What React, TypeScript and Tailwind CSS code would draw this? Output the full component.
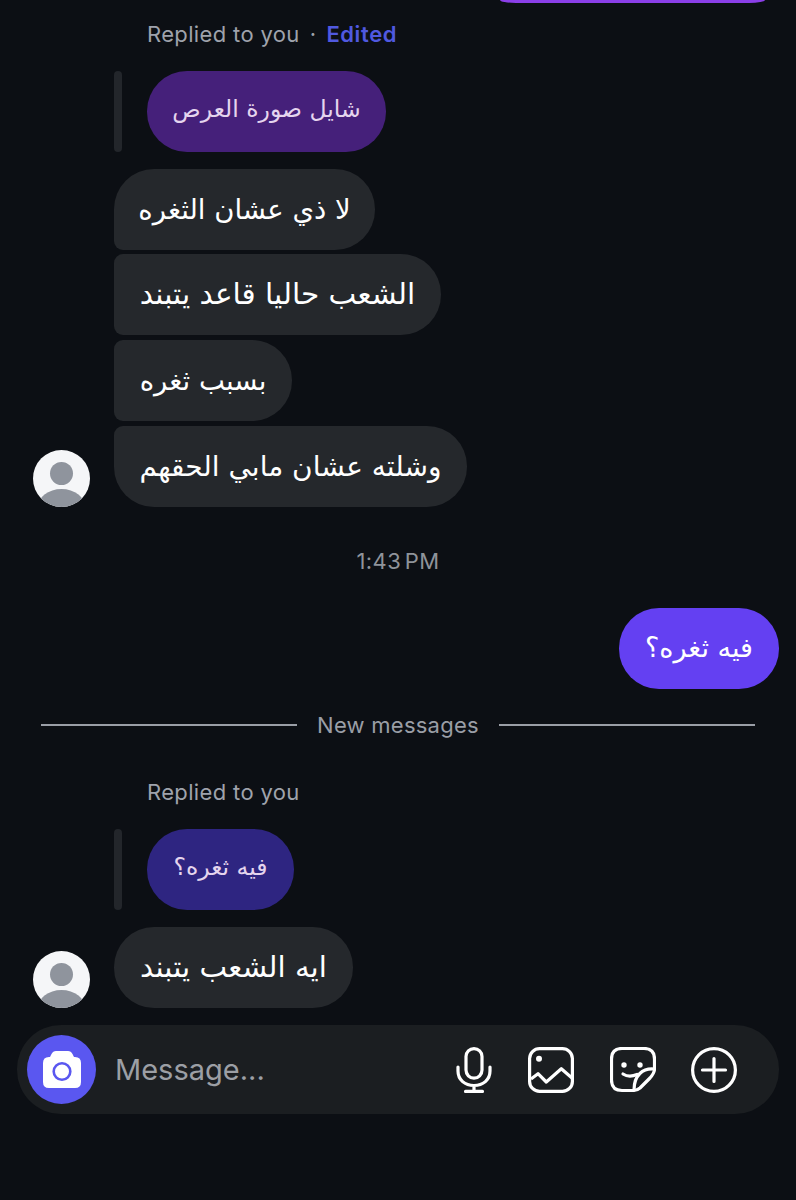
const arabic = { fontFamily: '"DejaVu Sans", sans-serif' };

function Avatar() {
    return (
        <svg viewBox="0 0 57 57" className="w-[57px] h-[57px] shrink-0">
            <defs>
                <clipPath id="circle"><circle cx="28.5" cy="28.5" r="28.5" /></clipPath>
            </defs>
            <g clipPath="url(#circle)">
                <rect width="57" height="57" fill="#f5f6f8" />
                <circle cx="28.5" cy="23.5" r="11.5" fill="#8f949d" />
                <ellipse cx="28.5" cy="58" rx="24" ry="19" fill="#8f949d" />
            </g>
        </svg>
    );
}

function Bubble({ text, width, className }: { text: string; width: string; className: string }) {
    return (
        <div dir="rtl" style={arabic} className={`h-[81px] flex items-center justify-center text-white whitespace-nowrap bg-[#25282c] ${width} ${className}`}>
            {text}
        </div>
    );
}

function Row({ avatar, mt, children }: { avatar?: boolean; mt: string; children: React.ReactNode }) {
    return (
        <div className={`flex items-end pl-[33px] ${mt}`}>
            <div className="w-[57px] mr-[24px] shrink-0">{avatar && <Avatar />}</div>
            {children}
        </div>
    );
}

function Reply({ text, width, bg, mt }: { text: string; width: string; bg: string; mt: string }) {
    return (
        <div className={`flex pl-[114px] ${mt}`}>
            <div className="w-[8px] h-[81px] rounded-full bg-[#23262b] mr-[25px]" />
            <div dir="rtl" style={arabic} className={`h-[81px] pb-[3px] rounded-[40px] flex items-center justify-center text-[#e5d5ee] text-[23.5px] whitespace-nowrap ${width} ${bg}`}>
                {text}
            </div>
        </div>
    );
}

function Label({ children, mt }: { children: React.ReactNode; mt: string }) {
    return <div className={`pl-[147px] h-[24px] leading-[24px] text-[22px] tracking-[0.35px] text-[#9fa3ac] whitespace-nowrap ${mt}`}>{children}</div>;
}

export default function App() {
    return (
        <div className="w-[796px] h-[1200px] overflow-hidden bg-[#0c0f14] flex flex-col" style={{ fontFamily: 'Inter, sans-serif' }}>
            <div className="h-[3px] ml-[500px] w-[265px] rounded-b-[16px_3px] bg-[#8b3fe8]" />
            <Label mt="mt-[19px]">
                Replied to you<span className="ml-[10px] mr-[10px]">·</span><span className="text-[#5059e0] font-semibold tracking-[0.6px]">Edited</span>
            </Label>
            <Reply text="شايل صورة العرص" width="w-[239px]" bg="bg-[#45207a]" mt="mt-[25px]" />
            <Row mt="mt-[17px]">
                <Bubble text="لا ذي عشان الثغره" width="w-[261px]" className="text-[27.5px] rounded-r-[40px] rounded-tl-[40px] rounded-bl-[9px]" />
            </Row>
            <Row mt="mt-[4px]">
                <Bubble text="الشعب حاليا قاعد يتبند" width="w-[327px]" className="text-[29.5px] rounded-r-[40px] rounded-l-[9px]" />
            </Row>
            <Row mt="mt-[5px]">
                <Bubble text="بسبب ثغره" width="w-[178px]" className="text-[27.5px] rounded-r-[40px] rounded-l-[9px]" />
            </Row>
            <Row avatar mt="mt-[5px]">
                <Bubble text="وشلته عشان مابي الحقهم" width="w-[353px]" className="text-[28px] rounded-r-[40px] rounded-tl-[9px] rounded-bl-[40px]" />
            </Row>
            <div className="mt-[42px] h-[24px] leading-[24px] text-center text-[22px] tracking-[0.4px] [word-spacing:-3px] text-[#8f939a]">1:43 PM</div>
            <div className="mt-[35px] flex justify-end pr-[17px]">
                <div dir="rtl" style={arabic} className="h-[81px] w-[160px] rounded-[40px] flex items-center justify-center bg-[#6440f2] text-white text-[27px] whitespace-nowrap">
                    فيه ثغره؟
                </div>
            </div>
            <div className="mt-[23px] h-[26px] flex items-center px-[41px]">
                <div className="flex-1 h-[2px] bg-[#9a9ea6]" />
                <div className="w-[202px] text-center text-[22px] tracking-[0.25px] text-[#9a9ea6]">New messages</div>
                <div className="flex-1 h-[2px] bg-[#9a9ea6]" />
            </div>
            <Label mt="mt-[42px]">Replied to you</Label>
            <Reply text="فيه ثغره؟" width="w-[147px]" bg="bg-[#2e2581]" mt="mt-[25px]" />
            <Row avatar mt="mt-[17px]">
                <Bubble text="ايه الشعب يتبند" width="w-[239px]" className="text-[29.3px] rounded-[40px]" />
            </Row>
            <div className="mt-[17px] mx-[17px] h-[89px] rounded-[44px] bg-[#1b1e21] flex items-center pl-[10px] pr-[42px]">
                <div className="w-[69px] h-[69px] rounded-full bg-[#5a57f0] flex items-center justify-center shrink-0">
                    <svg viewBox="0 0 38 37" className="w-[38px] h-[37px]">
                        <path fill="#fff" d="M13 0h12q3 0 4.5 3l1.5 3h1q6 0 6 6v19q0 6-6 6H6q-6 0-6-6V12q0-6 6-6h1l1.500-3q1.500-3 4.500-3Z" />
                        <circle cx="19" cy="20.500" r="8.300" fill="none" stroke="#5a57f0" strokeWidth="2.600" />
                    </svg>
                </div>
                <div className="ml-[19px] flex-1 text-[29px] text-[#9c9fa5]">Message...</div>
                <div className="flex items-center gap-[36px] text-white">
                    <svg viewBox="0 0 36 46" className="w-[36px] h-[46px]" fill="none" stroke="currentColor" strokeWidth="3.200" strokeLinecap="round">
                        <rect x="10" y="1.600" width="16" height="29.500" rx="8" />
                        <path d="M2 20v4c0 9 7 14.500 16 14.500s16-5.500 16-14.500v-4M18 38.500v5.500M9.500 44.400h17" />
                    </svg>
                    <svg viewBox="0 0 46 46" className="w-[46px] h-[46px]" fill="none" stroke="currentColor" strokeWidth="3.200" strokeLinejoin="round">
                        <rect x="1.600" y="1.600" width="42.800" height="42.800" rx="10" />
                        <circle cx="11" cy="11.700" r="3" fill="currentColor" stroke="none" />
                        <path d="M3 32l7-5.300L18.300 35l15-13.300L44 31" />
                    </svg>
                    <svg viewBox="0 0 46 46" className="w-[46px] h-[46px]" fill="none" stroke="currentColor" strokeWidth="3.200" strokeLinecap="round" strokeLinejoin="round">
                        <path d="M24 43.500H12Q1.500 43.500 1.500 33V12Q1.500 1.500 12 1.500h22Q44.500 1.500 44.500 12v10Q44.500 26 40 31L30 41Q27 43.500 24 43.500Z" />
                        <path d="M44 22C33 21 24 28 24 43" />
                        <circle cx="14" cy="18" r="2.700" fill="currentColor" stroke="none" />
                        <circle cx="30" cy="18" r="2.700" fill="currentColor" stroke="none" />
                        <path d="M13 27Q19 31 27 27.500" />
                    </svg>
                    <svg viewBox="0 0 46 46" className="w-[46px] h-[46px] -ml-[1px]" fill="none" stroke="currentColor" strokeWidth="3.200" strokeLinecap="round">
                        <circle cx="23" cy="23" r="21.400" />
                        <path d="M23 11.500v23M11.500 23h23" />
                    </svg>
                </div>
            </div>
        </div>
    );
}
